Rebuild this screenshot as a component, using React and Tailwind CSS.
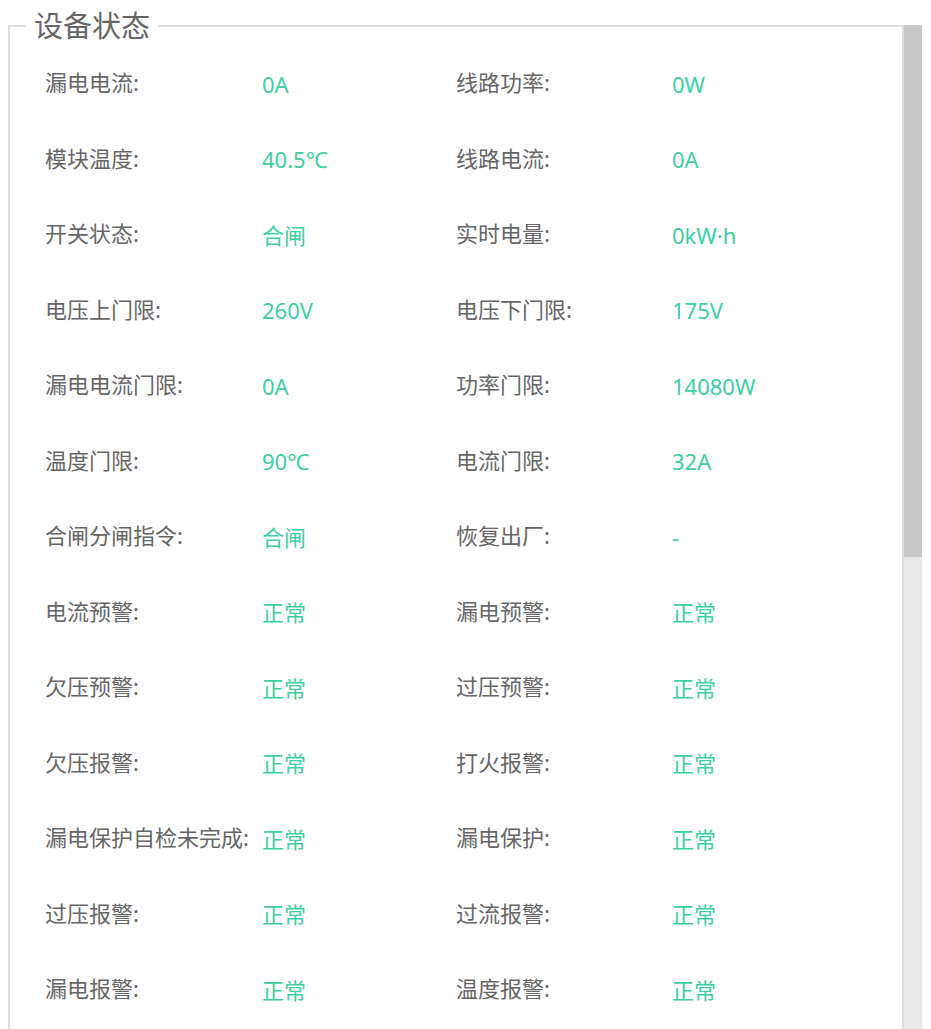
const rows = [
  ["漏电电流:", "0A", "线路功率:", "0W"],
  ["模块温度:", "40.5℃", "线路电流:", "0A"],
  ["开关状态:", "合闸", "实时电量:", "0kW·h"],
  ["电压上门限:", "260V", "电压下门限:", "175V"],
  ["漏电电流门限:", "0A", "功率门限:", "14080W"],
  ["温度门限:", "90℃", "电流门限:", "32A"],
  ["合闸分闸指令:", "合闸", "恢复出厂:", "-"],
  ["电流预警:", "正常", "漏电预警:", "正常"],
  ["欠压预警:", "正常", "过压预警:", "正常"],
  ["欠压报警:", "正常", "打火报警:", "正常"],
  ["漏电保护自检未完成:", "正常", "漏电保护:", "正常"],
  ["过压报警:", "正常", "过流报警:", "正常"],
  ["漏电报警:", "正常", "温度报警:", "正常"],
];

export default function App() {
  return (
    <div
      className="h-[1029px] w-[931px] overflow-hidden bg-white flex"
      style={{ fontFamily: '"Noto Sans", "Noto Sans CJK SC", sans-serif' }}
    >
      <fieldset className="ml-[8px] mt-[11px] w-[896px] shrink-0 border-2 border-[#dddddd] p-0 h-[1100px]">
        <legend className="ml-[16px] px-[8px] text-[29px] leading-[29px] text-[#666666]">设备状态</legend>
        <div className="pl-[35px] pt-[5px]">
          {rows.map((r, i) => (
            <div key={i} className="grid grid-cols-[217px_194px_216px_1fr] h-[75.5px] items-center text-[22px]">
              <span className="text-[#666666] whitespace-nowrap">{r[0]}</span>
              <span className="text-[#3ccfa4] pt-[3px]">{r[1]}</span>
              <span className="text-[#666666] whitespace-nowrap">{r[2]}</span>
              <span className="text-[#3ccfa4] pt-[3px]">{r[3]}</span>
            </div>
          ))}
        </div>
      </fieldset>
      <div className="mt-[25px] w-[18px] shrink-0 flex flex-col bg-[#e8e8e8]">
        <div className="h-[532px] bg-[#c8c8c8]" />
      </div>
    </div>
  );
}
